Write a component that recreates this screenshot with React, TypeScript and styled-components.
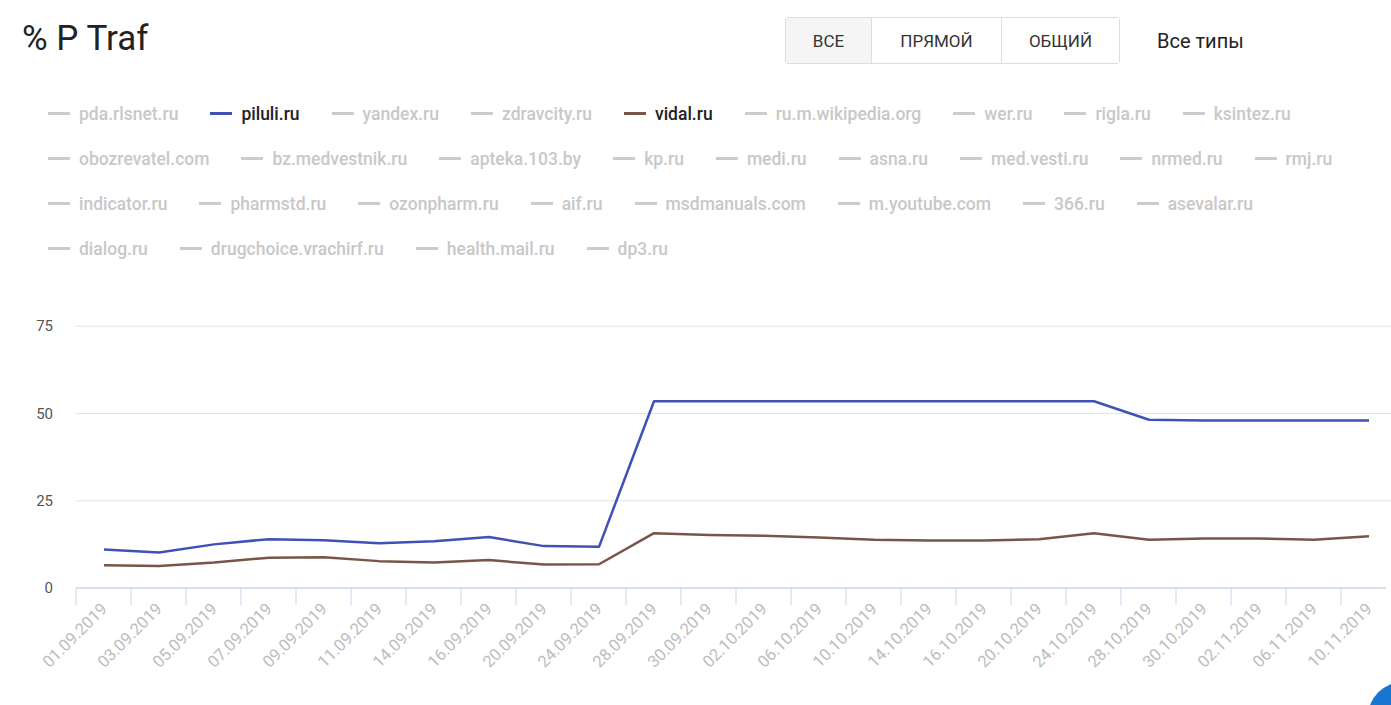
import React from 'react'
import styled, { createGlobalStyle } from 'styled-components'

const Global = createGlobalStyle`
  body { margin: 0; background: #fff; font-family: Roboto, 'Liberation Sans', sans-serif; overflow: hidden; }
`

const Page = styled.div`
  position: relative;
  width: 1391px;
  height: 705px;
  overflow: hidden;
`

const Header = styled.div`
  display: flex;
  align-items: center;
  height: 64px;
  padding: 17px 0 0 22px;
  box-sizing: border-box;
`

const Title = styled.h1`
  margin: 0;
  font-size: 35px;
  font-weight: 400;
  color: #222;
  width: 763px;
  margin-top: -4px;
`

const Group = styled.div`
  display: flex;
  height: 47px;
  border: 1px solid #ddd;
  border-radius: 3px;
  box-sizing: border-box;
`

const GroupButton = styled.div<{ active?: boolean }>`
  display: flex;
  align-items: center;
  justify-content: center;
  width: ${({ w }: { w?: number }) => w}px;
  font-size: 17px;
  color: #333;
  background: ${({ active }: { active?: boolean }) => (active ? '#f5f5f5' : '#fff')};
  & + & { border-left: 1px solid #ddd; }
` as any

const Types = styled.div`
  margin-left: 37px;
  font-size: 20px;
  color: #222;
`

const Legend = styled.div`
  display: flex;
  flex-direction: column;
  gap: 22px;
  padding: 38px 0 0 48px;
`

const LegendRow = styled.div`
  display: flex;
  gap: 32px;
`

const Item = styled.div<{ active?: boolean }>`
  display: flex;
  align-items: center;
  gap: 9px;
  font-size: 17.5px;
  font-weight: 500;
  height: 23px;
  color: ${({ active }) => (active ? '#222' : '#c8c8c8')};
`

const Swatch = styled.span<{ color: string }>`
  width: 22px;
  height: 3px;
  background: ${({ color }) => color};
`

const Chart = styled.svg`
  position: absolute;
  left: 0;
  top: 300px;
`

const Fab = styled.div`
  position: absolute;
  left: 1368px;
  top: 682px;
  width: 70px;
  height: 70px;
  border-radius: 50%;
  background: #1976d2;
`

const BLUE = '#3f51b5'
const BROWN = '#795548'

const rows: [string, string?][][] = [
  [['pda.rlsnet.ru'], ['piluli.ru', BLUE], ['yandex.ru'], ['zdravcity.ru'], ['vidal.ru', BROWN], ['ru.m.wikipedia.org'], ['wer.ru'], ['rigla.ru'], ['ksintez.ru']],
  [['obozrevatel.com'], ['bz.medvestnik.ru'], ['apteka.103.by'], ['kp.ru'], ['medi.ru'], ['asna.ru'], ['med.vesti.ru'], ['nrmed.ru'], ['rmj.ru']],
  [['indicator.ru'], ['pharmstd.ru'], ['ozonpharm.ru'], ['aif.ru'], ['msdmanuals.com'], ['m.youtube.com'], ['366.ru'], ['asevalar.ru']],
  [['dialog.ru'], ['drugchoice.vrachirf.ru'], ['health.mail.ru'], ['dp3.ru']],
]

const dates = ['01.09.2019', '03.09.2019', '05.09.2019', '07.09.2019', '09.09.2019', '11.09.2019', '14.09.2019', '16.09.2019', '20.09.2019', '24.09.2019', '28.09.2019', '30.09.2019', '02.10.2019', '06.10.2019', '10.10.2019', '14.10.2019', '16.10.2019', '20.10.2019', '24.10.2019', '28.10.2019', '30.10.2019', '02.11.2019', '06.11.2019', '10.11.2019']
const blue = [11, 10.2, 12.5, 14, 13.7, 12.8, 13.4, 14.6, 12, 11.8, 53.5, 53.5, 53.5, 53.5, 53.5, 53.5, 53.5, 53.5, 53.5, 48.2, 48, 48, 48, 48]
const brown = [6.5, 6.3, 7.3, 8.7, 8.8, 7.7, 7.3, 8, 6.7, 6.8, 15.7, 15.2, 15, 14.5, 13.8, 13.6, 13.6, 14, 15.7, 13.8, 14.2, 14.2, 13.8, 14.8]

// chart coords relative to svg top (300)
const y0 = 288
const py = (v: number) => y0 - v * 3.49
const px = (i: number) => 104 + i * 55
const path = (d: number[]) => d.map((v, i) => `${i ? 'L' : 'M'}${px(i)},${py(v)}`).join(' ')

export default function App() {
  return (
    <Page>
      <Global />
      <Header>
        <Title>% P Traf</Title>
        <Group>
          <GroupButton active w={85}>ВСЕ</GroupButton>
          <GroupButton w={129}>ПРЯМОЙ</GroupButton>
          <GroupButton w={117}>ОБЩИЙ</GroupButton>
        </Group>
        <Types>Все типы</Types>
      </Header>
      <Legend>
        {rows.map((r, ri) => (
          <LegendRow key={ri}>
            {r.map(([name, c]) => (
              <Item key={name} active={!!c}>
                <Swatch color={c || '#ccc'} />
                {name}
              </Item>
            ))}
          </LegendRow>
        ))}
      </Legend>
      <Chart width={1391} height={405}>
        {[0, 25, 50, 75].map((v) => (
          <g key={v}>
            {v > 0 && <line x1={76} x2={1391} y1={py(v)} y2={py(v)} stroke="#e3e3e3" />}
            <text x={53} y={py(v) + 5} textAnchor="end" fontSize={15} fill="#555" fontFamily="Roboto">{v}</text>
          </g>
        ))}
        <line x1={76} x2={1386} y1={y0} y2={y0} stroke="#c9d4ea" strokeWidth={1.5} />
        {Array.from({ length: 25 }, (_, i) => (
          <line key={i} x1={76 + i * 55} x2={76 + i * 55} y1={y0} y2={y0 + 17} stroke="#c9d4ea" />
        ))}
        <path d={path(brown)} fill="none" stroke={BROWN} strokeWidth={2.5} strokeLinejoin="round" />
        <path d={path(blue)} fill="none" stroke={BLUE} strokeWidth={2.5} strokeLinejoin="round" />
        {dates.map((d, i) => (
          <text key={d} x={px(i) + 4} y={y0 + 22} textAnchor="end" fontSize={16.5} fill="#bdbdbd" fontFamily="Roboto"
            transform={`rotate(-45 ${px(i) + 4} ${y0 + 22})`}>{d}</text>
        ))}
      </Chart>
      <Fab />
    </Page>
  )
}
